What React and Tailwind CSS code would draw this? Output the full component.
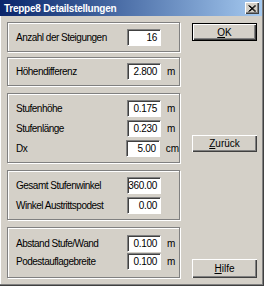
import React from 'react';

const font = { fontFamily: '"Liberation Sans", Arial, sans-serif' };

const Field = ({ label, value, unit }) => (
  <div className="flex items-center h-[17px]">
    <span className="w-[111px] text-[10px] tracking-[-0.5px] text-black whitespace-nowrap">{label}</span>
    <div className="w-[34px] h-[17px] bg-white border-t border-l border-t-[#808080] border-l-[#808080] border-b border-r border-b-white border-r-white shadow-[inset_1px_1px_0_#404040] flex items-center justify-end pr-[3px] text-[10px] tracking-[-0.3px] text-black">
      {value}
    </div>
    {unit && <span className="ml-[6px] text-[10px] text-black">{unit}</span>}
  </div>
);

const Group = ({ className, children }) => (
  <div className={`border border-[#808080] shadow-[1px_1px_0_#fff,inset_1px_1px_0_#fff] pl-[8px] flex flex-col justify-center ${className}`}>
    {children}
  </div>
);

const Btn = ({ children, def, className }) => (
  <div
    className={`w-[65px] flex items-center justify-center text-[10px] text-black bg-[#d4d0c8] ${
      def
        ? 'border border-black shadow-[inset_1px_1px_0_#fff,inset_-1px_-1px_0_#404040,inset_-2px_-2px_0_#808080]'
        : 'shadow-[inset_1px_1px_0_#fff,inset_-1px_-1px_0_#404040,inset_-2px_-2px_0_#808080]'
    } ${className}`}
  >
    {children}
  </div>
);

export default function App() {
  return (
    <div
      style={font}
      className="w-[264px] h-[286px] bg-[#d4d0c8] overflow-hidden flex flex-col shadow-[inset_-1px_-1px_0_#404040,inset_-2px_-2px_0_#808080,inset_1px_0_0_#fff]"
    >
      <div className="h-[16px] shrink-0 bg-gradient-to-r from-[#0a246a] to-[#a6caf0] flex items-center justify-between pl-[4px] pr-[3px] mr-[2px]">
        <span className="text-white font-bold text-[10px] tracking-[-0.25px] whitespace-nowrap">Treppe8 Detailstellungen</span>
        <div className="w-[14px] h-[12px] bg-[#d4d0c8] flex items-center justify-center shadow-[inset_1px_1px_0_#fff,inset_-1px_-1px_0_#404040,inset_-2px_-2px_0_#808080]">
          <svg width="8" height="7" viewBox="0 0 8 7">
            <path d="M0.5 0.5 L7 6.5 M1.5 0.5 L8 6.5 M7 0.5 L0.5 6.5 M8 0.5 L1.5 6.5" stroke="#000" strokeWidth="1" />
          </svg>
        </div>
      </div>
      <div className="flex pl-[7px]">
        <div className="w-[173px] flex flex-col">
          <Group className="mt-[6px] h-[30px]">
            <Field label="Anzahl der Steigungen" value="16" />
          </Group>
          <Group className="mt-[5px] h-[29px]">
            <Field label="Höhendifferenz" value="2.800" unit="m" />
          </Group>
          <Group className="mt-[7px] h-[70px] gap-[3px]">
            <Field label="Stufenhöhe" value="0.175" unit="m" />
            <Field label="Stufenlänge" value="0.230" unit="m" />
            <Field label="Dx" value="5.00" unit="cm" />
          </Group>
          <Group className="mt-[7px] h-[50px] gap-[3px]">
            <Field label="Gesamt Stufenwinkel" value="360.00" />
            <Field label="Winkel Austrittspodest" value="0.00" />
          </Group>
          <Group className="mt-[7px] h-[51px] gap-[1px]">
            <Field label="Abstand Stufe/Wand" value="0.100" unit="m" />
            <Field label="Podestauflagebreite" value="0.100" unit="m" />
          </Group>
        </div>
        <div className="ml-[12px] flex flex-col">
          <Btn def className="mt-[7px] h-[18px]">
            <span><span className="underline">O</span>K</span>
          </Btn>
          <Btn className="mt-[94px] h-[17px]">
            <span><span className="underline">Z</span>urück</span>
          </Btn>
          <Btn className="mt-[107px] h-[19px]">
            <span><span className="underline">H</span>ilfe</span>
          </Btn>
        </div>
      </div>
    </div>
  );
}
